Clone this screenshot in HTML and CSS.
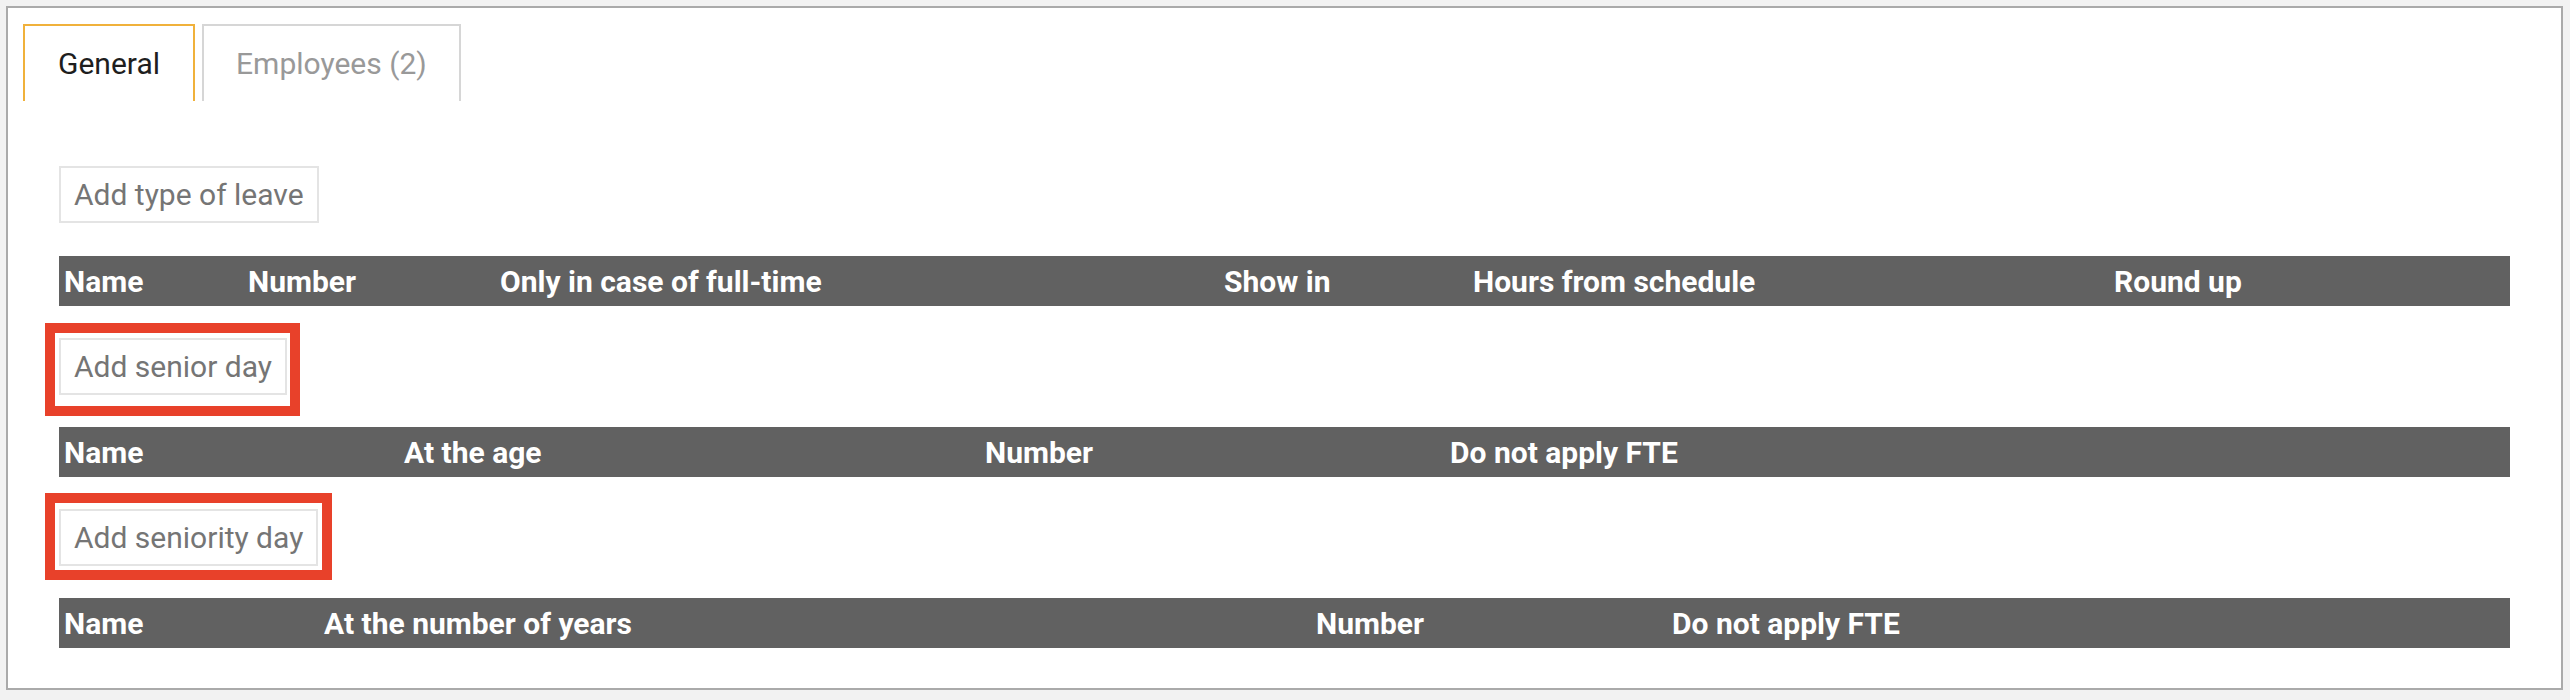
FILE: index.html
```html
<!DOCTYPE html>
<html lang="en">
<head>
<meta charset="utf-8">
<title>Leave settings</title>
<link rel="stylesheet" href="styles.css">
</head>
<body>
<div class="panel">
  <div class="tabs">
    <div class="tab tab-active">General</div>
    <div class="tab">Employees (2)</div>
  </div>
  <div class="content">
    <div class="btn-row btn-row-first">
      <span class="btn">Add type of leave</span>
    </div>
    <div class="thead thead-leave">
      <div class="th">Name</div>
      <div class="th">Number</div>
      <div class="th">Only in case of full-time</div>
      <div class="th">Show in</div>
      <div class="th">Hours from schedule</div>
      <div class="th">Round up</div>
    </div>
    <div class="btn-row">
      <span class="btn btn-marked">Add senior day<span class="mark mark-senior"></span></span>
    </div>
    <div class="thead thead-senior">
      <div class="th">Name</div>
      <div class="th">At the age</div>
      <div class="th">Number</div>
      <div class="th">Do not apply FTE</div>
    </div>
    <div class="btn-row">
      <span class="btn btn-marked">Add seniority day<span class="mark mark-seniority"></span></span>
    </div>
    <div class="thead thead-seniority">
      <div class="th">Name</div>
      <div class="th">At the number of years</div>
      <div class="th">Number</div>
      <div class="th">Do not apply FTE</div>
    </div>
  </div>
</div>
</body>
</html>
```
FILE: styles.css
```css
* { box-sizing: border-box; }
html, body { margin: 0; padding: 0; }
body {
  background: #f2f2f2;
  padding: 6px;
  font-family: Roboto, "Noto Sans", sans-serif;
}
.panel {
  width: 2557px;
  height: 684px;
  background: #fff;
  border: 2px solid #aaaaaa;
}
.tabs {
  display: flex;
  gap: 7px;
  padding: 16px 0 0 15px;
}
.tab {
  height: 77px;
  padding: 0 32px;
  border: 2px solid #d6d6d6;
  border-bottom: none;
  font-size: 30px;
  color: #999999;
  display: flex;
  align-items: center;
}
.tab-active {
  border-color: #f0b13b;
  color: #1e1e1e;
  padding: 0 33px;
}
.content {
  padding: 0 51px;
}
.btn-row {
  display: flex;
  margin: 32px 0;
}
.btn-row-first {
  margin: 65px 0 33px;
}
.btn {
  position: relative;
  height: 57px;
  padding: 0 13px;
  border: 2px solid #e4e4e4;
  color: #757575;
  font-size: 30px;
  display: flex;
  align-items: center;
}
.mark {
  position: absolute;
  border: 10px solid #e8412a;
  pointer-events: none;
}
.mark-senior {
  left: -16px;
  right: -15px;
  top: -17px;
  bottom: -23px;
}
.mark-seniority {
  left: -16px;
  right: -16px;
  top: -18px;
  bottom: -16px;
}
.thead {
  display: grid;
  height: 50px;
  background: #616161;
  color: #fff;
  font-weight: 700;
  font-size: 30px;
  align-items: center;
}
.th {
  padding-left: 5px;
  white-space: nowrap;
}
.thead-leave { grid-template-columns: 184px 252px 724px 249px 641px 1fr; }
.thead-senior { grid-template-columns: 340px 581px 465px 1fr; }
.thead-seniority { grid-template-columns: 260px 992px 356px 1fr; }
```
